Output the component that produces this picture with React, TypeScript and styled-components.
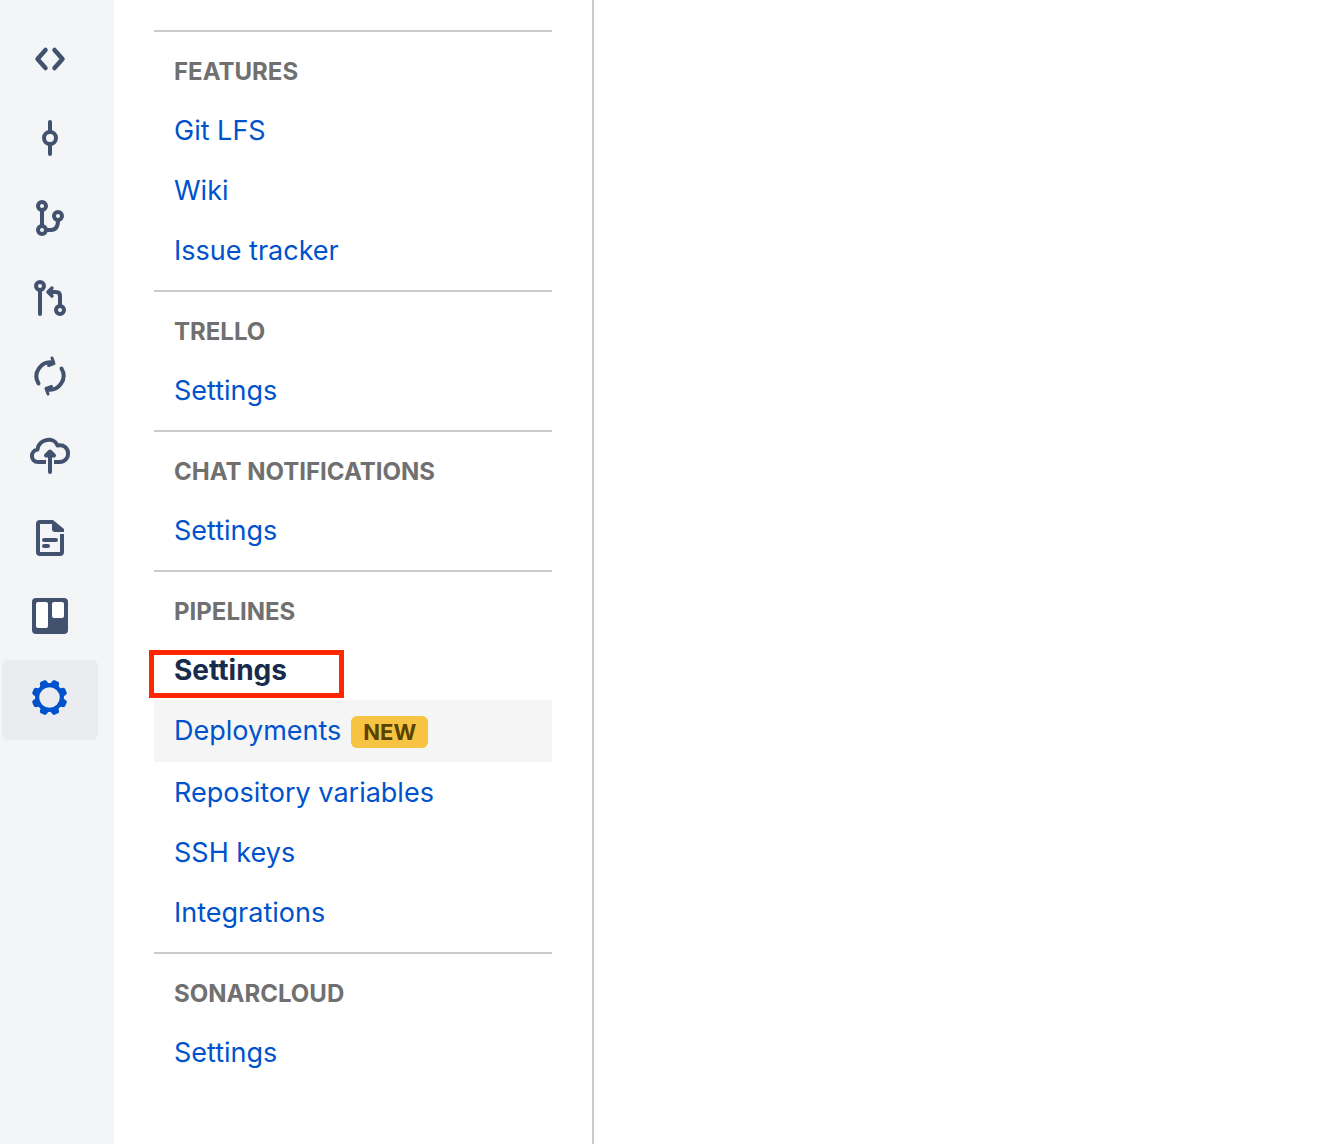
import React from 'react';
import styled, { createGlobalStyle } from 'styled-components';

const GlobalStyle = createGlobalStyle`
  * { box-sizing: border-box; }
  body { margin: 0; background: #fff; font-family: Inter, 'Liberation Sans', sans-serif; }
`;

const Page = styled.div`
  display: flex;
  min-height: 100vh;
  overflow: hidden;
`;

const Rail = styled.nav`
  flex: none;
  display: flex;
  flex-direction: column;
  width: 114px;
  padding: 20px 2px;
  background: #f4f5f7;
`;

const RailButton = styled.button<{ $active?: boolean }>`
  display: flex;
  align-items: center;
  justify-content: center;
  width: 96px;
  height: 80px;
  padding: 0;
  border: 0;
  border-radius: 6px;
  background: ${(p) => (p.$active ? '#ebecf0' : 'transparent')};
  color: ${(p) => (p.$active ? '#0052cc' : '#42526e')};
  cursor: pointer;
`;

const Glyph = styled.svg`
  display: block;
  width: 48px;
  height: 48px;
  fill: none;
  stroke: currentColor;
  stroke-width: 4;
  stroke-linecap: round;
  stroke-linejoin: round;
`;

const Sidebar = styled.aside`
  flex: none;
  width: 480px;
  padding: 0 40px;
  border-right: 2px solid #ccc;
`;

const ScrolledGroup = styled.div`
  display: flex;
  flex-direction: column;
  justify-content: flex-end;
  height: 30px;
  overflow: hidden;
`;

const Section = styled.section`
  border-top: 2px solid #ccc;
`;

const Heading = styled.h2`
  margin: 0;
  padding: 20px 20px 8px;
  font-size: 24px;
  line-height: 40px;
  font-weight: 700;
  color: #707070;
  text-transform: uppercase;
`;

const List = styled.ul`
  margin: 0;
  padding: 0 0 10px;
  list-style: none;
`;

const Item = styled.li`
  position: relative;
`;

const ItemLink = styled.a<{ $current?: boolean; $hover?: boolean }>`
  display: flex;
  align-items: baseline;
  gap: 10px;
  min-height: ${(p) => (p.$hover ? 62 : 60)}px;
  padding: 10px 20px 8px;
  background: ${(p) => (p.$hover ? '#f5f5f5' : 'transparent')};
  color: ${(p) => (p.$current ? '#172b4d' : '#0052cc')};
  font-size: ${(p) => (p.$current ? 28 : 27)}px;
  line-height: ${(p) => (p.$current ? 40 : 42)}px;
  font-weight: ${(p) => (p.$current ? 700 : 400)};
  text-decoration: none;
  white-space: nowrap;
`;

const Badge = styled.span`
  padding: 0 12px;
  border-radius: 6px;
  background: #f6c342;
  color: #594300;
  font-size: 22px;
  line-height: 32px;
  font-weight: 700;
`;

const Marker = styled.span`
  position: absolute;
  top: 10px;
  left: -5px;
  width: 195px;
  height: 48px;
  border: 5px solid #ff2600;
  pointer-events: none;
`;

const Main = styled.main`
  flex: 1;
`;

const gearTeeth = [22.5, 67.5, 112.5, 157.5, 202.5, 247.5, 292.5, 337.5];

const railItems: { label: string; active?: boolean; art: React.ReactNode }[] = [
  { label: 'Source', art: <path d="M19.500 14 11.500 23l8 9M28.500 14l8 9-8 9" strokeWidth="4.500" /> },
  { label: 'Commits', art: <><path d="M24 6v10M24 28v10" /><circle cx="24" cy="22" r="6" /></> },
  {
    label: 'Branches',
    art: <><circle cx="16" cy="10" r="4" /><circle cx="16" cy="34" r="4" /><circle cx="32" cy="20" r="4" /><path d="M16 14v16M20 34h5q7 0 7-10" /></>,
  },
  {
    label: 'Pull requests',
    art: <><circle cx="14" cy="10" r="4" /><circle cx="34" cy="34" r="4" /><path d="M14 14v24M34 30V20q0-4-4-4h-7" /><path d="m26 12-4 4 4 4" strokeWidth="3.500" /></>,
  },
  {
    label: 'Pipelines',
    art: (
      <>
        <path d="M12.500 27.500A14 14 0 0 1 27 6.500M35.500 12.500A14 14 0 0 1 21 33.500" />
        <path d="m26 2 2 5.500-5.500 2M22 38l-2-5.500 5.500-2" strokeWidth="3" />
      </>
    ),
  },
  {
    label: 'Deployments',
    art: (
      <>
        <path d="M20 26h-8c-7.500 0-8.500-11-.500-12.500C13 2 28.500 1 31.500 9.500 45 7 45.500 26 33.500 26H28" strokeLinecap="butt" />
        <path d="M24 18v18M20 19.500l4-4 4 4z" />
      </>
    ),
  },
  {
    label: 'Downloads',
    art: (
      <>
        <path d="M36 18v18q0 2-2 2H14q-2 0-2-2V8q0-2 2-2h13" strokeLinecap="butt" />
        <path d="M26 4h1l11 9v3h-9q-3 0-3-3z" fill="currentColor" stroke="none" />
        <path d="M18 24h12M18 30h4" />
      </>
    ),
  },
  {
    label: 'Boards',
    art: (
      <>
        <rect x="6" y="2" width="36" height="36" rx="4" fill="currentColor" stroke="none" />
        <rect x="10" y="6" width="12" height="26" rx="2" fill="#fff" stroke="none" />
        <rect x="26" y="6" width="12" height="16" rx="2" fill="#fff" stroke="none" />
      </>
    ),
  },
  {
    label: 'Repository settings',
    active: true,
    art: (
      <>
        <circle cx="23.500" cy="21.500" r="12.300" />
        {gearTeeth.map((a) => (
          <path key={a} d="M17.500 9.500q2.300-1.300 2.300-4.300l1.200-1.500h5l1.200 1.500q0 3 2.300 4.300z" transform={`rotate(${a} 23.500 21.500)`} fill="currentColor" stroke="none" />
        ))}
      </>
    ),
  },
];

type Entry = { label: string; current?: boolean; badge?: string };

const sections: { title: string; items: Entry[] }[] = [
  { title: 'Features', items: [{ label: 'Git LFS' }, { label: 'Wiki' }, { label: 'Issue tracker' }] },
  { title: 'Trello', items: [{ label: 'Settings' }] },
  { title: 'Chat notifications', items: [{ label: 'Settings' }] },
  {
    title: 'Pipelines',
    items: [
      { label: 'Settings', current: true },
      { label: 'Deployments', badge: 'NEW' },
      { label: 'Repository variables' },
      { label: 'SSH keys' },
      { label: 'Integrations' },
    ],
  },
  { title: 'SonarCloud', items: [{ label: 'Settings' }] },
];

function NavItem({ label, current, badge }: Entry) {
  return (
    <Item>
      <ItemLink href="#" $current={current} $hover={!!badge} aria-current={current ? 'page' : undefined}>
        {label}
        {badge && <Badge>{badge}</Badge>}
      </ItemLink>
      {current && <Marker />}
    </Item>
  );
}

export default function App() {
  return (
    <Page>
      <GlobalStyle />
      <Rail aria-label="Repository">
        {railItems.map((item) => (
          <RailButton key={item.label} type="button" $active={item.active} aria-label={item.label}>
            <Glyph viewBox="0 0 48 48" aria-hidden="true">{item.art}</Glyph>
          </RailButton>
        ))}
      </Rail>
      <Sidebar>
        <ScrolledGroup>
          <List>
            <NavItem label="Excluded files" />
          </List>
        </ScrolledGroup>
        {sections.map((section) => (
          <Section key={section.title}>
            <Heading>{section.title}</Heading>
            <List>
              {section.items.map((item) => (
                <NavItem key={item.label} {...item} />
              ))}
            </List>
          </Section>
        ))}
      </Sidebar>
      <Main />
    </Page>
  );
}
